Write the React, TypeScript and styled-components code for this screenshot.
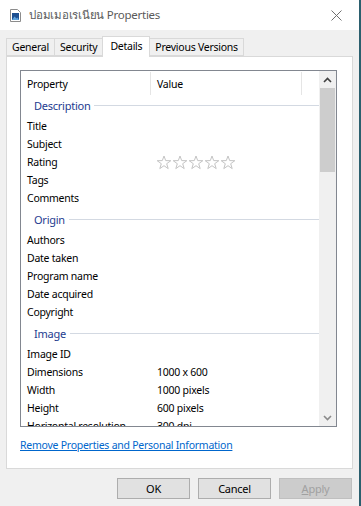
import React from "react";
import styled, { createGlobalStyle } from "styled-components";

type Row =
  | { kind: "group"; label: string }
  | { kind: "prop"; label: string; value?: string; rating?: boolean };

const rows: Row[] = [
  { kind: "group", label: "Description" },
  { kind: "prop", label: "Title" },
  { kind: "prop", label: "Subject" },
  { kind: "prop", label: "Rating", rating: true },
  { kind: "prop", label: "Tags" },
  { kind: "prop", label: "Comments" },
  { kind: "group", label: "Origin" },
  { kind: "prop", label: "Authors" },
  { kind: "prop", label: "Date taken" },
  { kind: "prop", label: "Program name" },
  { kind: "prop", label: "Date acquired" },
  { kind: "prop", label: "Copyright" },
  { kind: "group", label: "Image" },
  { kind: "prop", label: "Image ID" },
  { kind: "prop", label: "Dimensions", value: "1000 x 600" },
  { kind: "prop", label: "Width", value: "1000 pixels" },
  { kind: "prop", label: "Height", value: "600 pixels" },
  { kind: "prop", label: "Horizontal resolution", value: "300 dpi" },
  { kind: "prop", label: "Vertical resolution", value: "300 dpi" },
];

const tabs = ["General", "Security", "Details", "Previous Versions"];

function Star() {
  return (
    <svg width="16" height="15" viewBox="0 0 16 15">
      <path
        d="M8 1 L9.7 5.6 L14.8 5.7 L10.7 8.7 L12.2 13.6 L8 10.7 L3.8 13.6 L5.3 8.7 L1.2 5.7 L6.3 5.6 Z"
        fill="none"
        stroke="#c4c4c4"
        strokeWidth="1"
        strokeLinejoin="round"
      />
    </svg>
  );
}

function Chevron({ up }: { up?: boolean }) {
  return (
    <svg width="9" height="6" viewBox="0 0 9 6">
      <path
        d={up ? "M1 5 L4.5 1.5 L8 5" : "M1 1 L4.5 4.5 L8 1"}
        fill="none"
        stroke={up ? "#404040" : "#8a8a8a"}
        strokeWidth="1.6"
      />
    </svg>
  );
}

function App() {
  return (
    <Window>
      <GlobalStyle />
      <TitleBar>
        <svg width="11" height="13" viewBox="0 0 11 13">
          <path d="M0.5 0.5 H7.5 L10.5 3.5 V12.5 H0.5 Z" fill="#fff" stroke="#8c8c8c" />
          <rect x="2" y="4" width="7" height="7" fill="#1d4f91" />
          <path d="M2 11 L4.5 7.5 L6.5 9.5 L7.5 8.5 L9 11 Z" fill="#5aa0dc" />
        </svg>
        <Title>ปอมเมอเรเนียน Properties</Title>
        <CloseButton>
          <svg width="11" height="11" viewBox="0 0 11 11">
            <path d="M0.5 0.5 L10.5 10.5 M10.5 0.5 L0.5 10.5" stroke="#707070" strokeWidth="1" />
          </svg>
        </CloseButton>
      </TitleBar>
      <Body>
        <TabStrip>
          {tabs.map((t) => (
            <Tab key={t} $active={t === "Details"}>
              {t}
            </Tab>
          ))}
        </TabStrip>
        <TabPanel>
          <ListBox>
            <ListContent>
              <HeaderRow>
                <HeaderCell $width={130}>Property</HeaderCell>
                <HeaderCell $width={151}>Value</HeaderCell>
              </HeaderRow>
              {rows.map((r) =>
                r.kind === "group" ? (
                  <GroupRow key={r.label}>
                    <GroupLabel>{r.label}</GroupLabel>
                    <GroupLine />
                  </GroupRow>
                ) : (
                  <PropRow key={r.label}>
                    <PropName>{r.label}</PropName>
                    <PropValue>
                      {r.rating ? (
                        <Stars>
                          <Star />
                          <Star />
                          <Star />
                          <Star />
                          <Star />
                        </Stars>
                      ) : (
                        r.value
                      )}
                    </PropValue>
                  </PropRow>
                )
              )}
            </ListContent>
            <ScrollBar>
              <ScrollArrow>
                <Chevron up />
              </ScrollArrow>
              <Track>
                <Thumb />
              </Track>
              <ScrollArrow>
                <Chevron />
              </ScrollArrow>
            </ScrollBar>
          </ListBox>
          <RemoveLink href="#">Remove Properties and Personal Information</RemoveLink>
        </TabPanel>
        <ButtonRow>
          <Button>OK</Button>
          <Button>Cancel</Button>
          <Button $disabled>
            <u>A</u>pply
          </Button>
        </ButtonRow>
      </Body>
    </Window>
  );
}

export default App;

const GlobalStyle = createGlobalStyle`
  html, body {
    margin: 0;
    padding: 0;
    background: #f0f0f0;
    overflow: hidden;
  }
  body {
    font-family: "Noto Sans", "Open Sans", sans-serif;
    font-size: 10.5px;
    letter-spacing: -0.25px;
    color: #000;
  }
`;

const Window = styled.div`
  width: 361px;
  height: 506px;
  box-sizing: border-box;
  border-right: 2px solid #2b5f6e;
  display: flex;
  flex-direction: column;
  background: #f0f0f0;
`;

const TitleBar = styled.div`
  height: 30px;
  background: #fff;
  display: flex;
  align-items: center;
  padding-left: 10px;
  flex-shrink: 0;
`;

const Title = styled.span`
  margin-left: 8px;
  font-size: 11.5px;
  color: #5a5a5a;
`;

const CloseButton = styled.div`
  margin-left: auto;
  width: 46px;
  display: flex;
  justify-content: center;
  align-items: center;
  height: 30px;
`;

const Body = styled.div`
  flex: 1;
  padding: 8px 0 0 6px;
  display: flex;
  flex-direction: column;
`;

const TabStrip = styled.div`
  display: flex;
  align-items: flex-end;
  height: 18px;
  padding-left: 1px;
  position: relative;
  z-index: 1;
`;

const Tab = styled.div<{ $active?: boolean }>`
  box-sizing: border-box;
  height: ${({ $active }) => ($active ? "21px" : "18px")};
  margin-bottom: ${({ $active }) => ($active ? "-1px" : "0")};
  padding: ${({ $active }) => ($active ? "0 7px 2px" : "0 5px")};
  display: flex;
  align-items: center;
  justify-content: center;
  background: ${({ $active }) => ($active ? "#fff" : "#f0f0f0")};
  border: 1px solid #d9d9d9;
  border-bottom: ${({ $active }) => ($active ? "none" : "1px solid #d9d9d9")};
  margin-left: -1px;
`;

const TabPanel = styled.div`
  box-sizing: border-box;
  width: 347px;
  height: 413px;
  background: #fff;
  border: 1px solid #d9d9d9;
  padding: 13px 0 0 13px;
  display: flex;
  flex-direction: column;
`;

const ListBox = styled.div`
  box-sizing: border-box;
  width: 317px;
  height: 357px;
  border: 1px solid #828790;
  display: flex;
  overflow: hidden;
`;

const ListContent = styled.div`
  flex: 1;
  overflow: hidden;
`;

const HeaderRow = styled.div`
  height: 22px;
  display: flex;
  align-items: stretch;
`;

const HeaderCell = styled.div<{ $width: number }>`
  width: ${({ $width }) => $width}px;
  box-sizing: border-box;
  padding-left: 6px;
  display: flex;
  align-items: center;
  border-right: 1px solid #e5e5e5;
  margin-top: 1px;
  margin-bottom: -2px;
`;

const GroupRow = styled.div`
  height: 24px;
  display: flex;
  align-items: center;
  padding-left: 13px;
  width: 288px;
`;

const GroupLabel = styled.span`
  color: #1e3c8f;
  font-size: 11px;
`;

const GroupLine = styled.div`
  flex: 1;
  height: 1px;
  background: #d3d9e2;
  margin-left: 4px;
`;

const PropRow = styled.div`
  height: 18px;
  display: flex;
  align-items: center;
`;

const PropName = styled.div`
  width: 130px;
  padding-left: 6px;
  box-sizing: border-box;
  white-space: nowrap;
`;

const PropValue = styled.div`
  padding-left: 6px;
  white-space: nowrap;
`;

const Stars = styled.div`
  display: flex;
  margin-left: -1px;
`;

const ScrollBar = styled.div`
  width: 17px;
  background: #f0f0f0;
  display: flex;
  flex-direction: column;
`;

const ScrollArrow = styled.div`
  height: 17px;
  display: flex;
  align-items: center;
  justify-content: center;
`;

const Track = styled.div`
  flex: 1;
  padding: 0 1px;
`;

const Thumb = styled.div`
  height: 84px;
  background: #cdcdcd;
`;

const RemoveLink = styled.a`
  margin-top: 11px;
  color: #0066cc;
  text-decoration: underline;
  align-self: flex-start;
`;

const ButtonRow = styled.div`
  display: flex;
  justify-content: flex-end;
  gap: 8px;
  padding: 9px 7px 0 0;
`;

const Button = styled.div<{ $disabled?: boolean }>`
  box-sizing: border-box;
  width: 73px;
  height: 21px;
  display: flex;
  align-items: center;
  justify-content: center;
  background: ${({ $disabled }) => ($disabled ? "#cccccc" : "#e1e1e1")};
  border: 1px solid ${({ $disabled }) => ($disabled ? "#bfbfbf" : "#adadad")};
  color: ${({ $disabled }) => ($disabled ? "#a0a0a0" : "#000")};
  font-size: 11px;
`;
